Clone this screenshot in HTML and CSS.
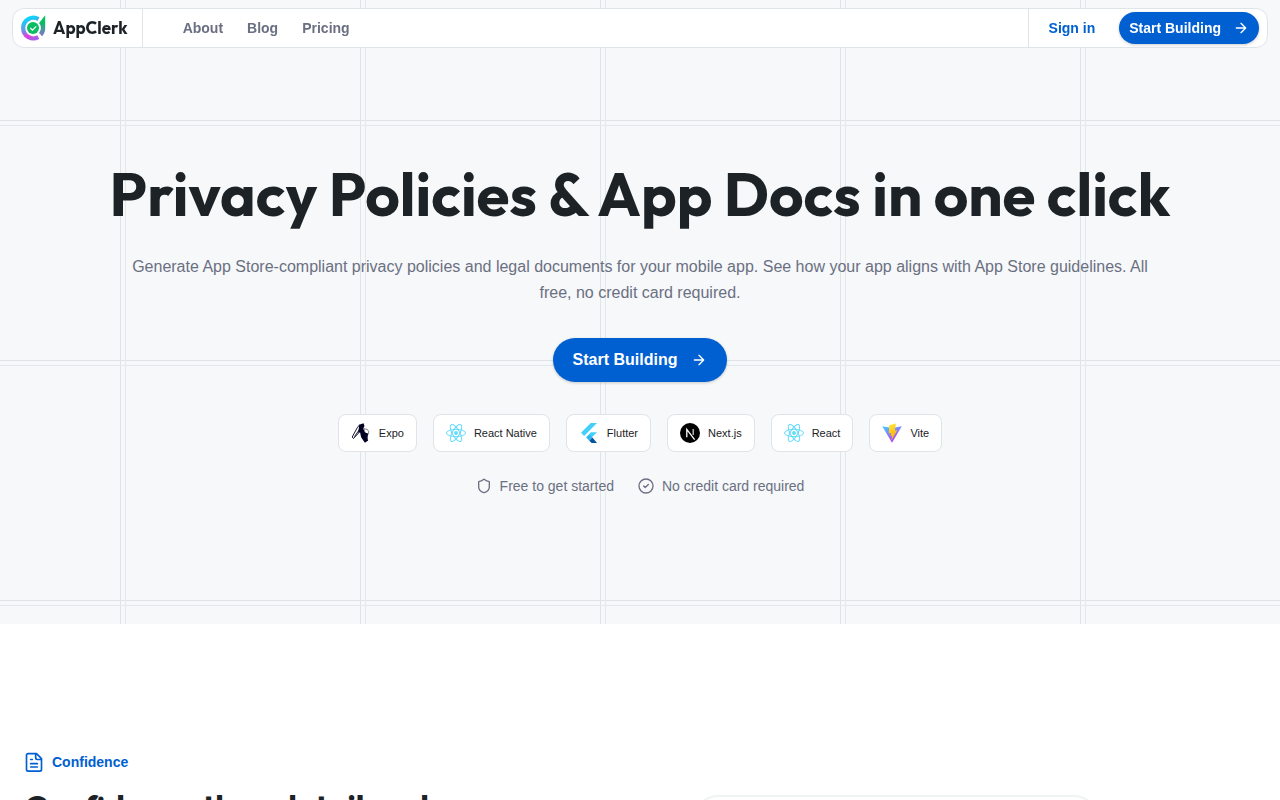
FILE: index.html
```html
<!DOCTYPE html>
<html lang="en">
<head>
<meta charset="utf-8">
<meta name="viewport" content="width=device-width, initial-scale=1">
<title>AppClerk</title>
<link rel="stylesheet" href="styles.css">
</head>
<body>
<svg class="defs" aria-hidden="true">
  <defs>
    <linearGradient id="ring" x1="0.3" y1="0" x2="0.6" y2="1"><stop offset="0" stop-color="#08d8fa"/><stop offset=".5" stop-color="#6d91e8"/><stop offset=".85" stop-color="#e838dc"/><stop offset="1" stop-color="#b05be8"/></linearGradient>
    <linearGradient id="tail" x1="0" y1="0" x2="0" y2="1"><stop offset=".35" stop-color="#08bd62"/><stop offset="1" stop-color="#8b70d6"/></linearGradient>
    <linearGradient id="vite-body" x1="0" y1="0" x2=".6" y2="1"><stop offset="0" stop-color="#41d1ff"/><stop offset="1" stop-color="#bd34fe"/></linearGradient>
    <linearGradient id="vite-bolt" x1=".4" y1="0" x2=".6" y2="1"><stop offset="0" stop-color="#ffea83"/><stop offset=".1" stop-color="#ffdd35"/><stop offset="1" stop-color="#ffa800"/></linearGradient>
    <symbol id="arrow" viewBox="0 0 24 24"><path d="M5 12h14M12 5l7 7-7 7"/></symbol>
    <symbol id="react" viewBox="0 0 20 20"><g fill="none" stroke="#61dafb"><ellipse cx="10" cy="10" rx="9.500" ry="3.700"/><ellipse cx="10" cy="10" rx="9.500" ry="3.700" transform="rotate(60 10 10)"/><ellipse cx="10" cy="10" rx="9.500" ry="3.700" transform="rotate(120 10 10)"/></g><circle cx="10" cy="10" r="1.900" fill="#61dafb"/></symbol>
  </defs>
</svg>

<header class="navbar">
  <a class="brand" href="#">
    <svg class="brand-mark" viewBox="0 0 26 26" aria-hidden="true">
      <path d="M17.500 4.100A10.300 10.300 0 1 0 17.300 22.200" fill="none" stroke="url(#ring)" stroke-width="4.200"/>
      <path d="M24.200 .2v13.300c0 3-1.200 5.800-3.200 7.800l-3-3.500c1.200-1.400 1.900-3 1.900-4.800 0-2-.7-3.500-1.800-5z" fill="url(#tail)"/>
      <circle cx="12" cy="13" r="6" fill="#08bd62"/>
      <path d="M9.300 13l2.200 2.200 3.700-3.800" fill="none" stroke="#fff" stroke-width="1.200"/>
    </svg>
    <span>AppClerk</span>
  </a>
  <nav class="nav-links" aria-label="Main">
    <a href="#">About</a>
    <a href="#">Blog</a>
    <a href="#">Pricing</a>
  </nav>
  <div class="nav-actions">
    <a class="sign-in" href="#">Sign in</a>
    <a class="button button-small" href="#">Start Building <svg class="line-icon" aria-hidden="true"><use href="#arrow"/></svg></a>
  </div>
</header>

<main>
  <section class="hero">
    <h1>Privacy Policies &amp; App Docs in one click</h1>
    <p class="lead">Generate App Store-compliant privacy policies and legal documents for your mobile app. See how your app aligns with App Store guidelines. All free, no credit card required.</p>
    <a class="button button-large" href="#">Start Building <svg class="line-icon" aria-hidden="true"><use href="#arrow"/></svg></a>
    <ul class="platforms">
      <li><svg viewBox="0 0 20 20" aria-hidden="true"><path d="M8.300 1.800l4.200-1.600 1 2.800-1.300 2.500 5 12-3.300 2.300-3.800-5.600-1-4.600-2 .2z" fill="#000020"/><path d="M8.800 1.500L6.200 4.800 1.200 14l1.300 1.500L8 9.600M3.500 13.500l5-7" fill="none" stroke="#000020" stroke-width=".9"/><path d="M12.700 5.500l3.800 1.100 1.300 2.200-.8 3-2.400-.4z" fill="#fff" stroke="#000020" stroke-width=".5"/><path d="M12.500 9l4.500 1.500-.5 5.500-2 1z" fill="#000020"/></svg>Expo</li>
      <li><svg aria-hidden="true"><use href="#react"/></svg>React Native</li>
      <li><svg viewBox="0 0 20 20" aria-hidden="true"><path d="M11.800 0H18L5.100 12.900 2 9.800z" fill="#42d0fb"/><path d="M11.800 9.200H18l-5.400 5.400-5.300 0z" fill="#42d0fb"/><path d="M7.200 14.600l3.100-3.100 3.100 3.100-3.100 3.100z" fill="#2eb8f2"/><path d="M10.300 17.700l3.100-3.100L18 20h-5.400z" fill="#07559f"/></svg>Flutter</li>
      <li><svg viewBox="0 0 20 20" aria-hidden="true"><circle cx="10" cy="10" r="10"/><path d="M6.800 14.200V6.400l7.800 10.200" fill="none" stroke="#fff" stroke-width="1.300"/><path d="M13.200 6v6" stroke="#ccc" stroke-width="1.300"/></svg>Next.js</li>
      <li><svg aria-hidden="true"><use href="#react"/></svg>React</li>
      <li><svg viewBox="0 0 20 20" aria-hidden="true"><path d="M.2 3.200L10 5l9.800-1.800L10 19.700z" fill="url(#vite-body)"/><path d="M14 .6L7.200 1.900 6.800 10.500l2.400-.4-.8 3 1.600-.4-.6 4.700 5.800-10.200-2.300.4z" fill="url(#vite-bolt)"/></svg>Vite</li>
    </ul>
    <ul class="assurances">
      <li><svg class="line-icon" viewBox="0 0 24 24" aria-hidden="true"><path d="M20 13c0 5-3.500 7.500-7.700 9a1 1 0 0 1-.6 0C7.500 20.500 4 18 4 13V6a1 1 0 0 1 1-1c2 0 4.500-1.200 6.200-2.700a1.200 1.200 0 0 1 1.600 0C14.500 3.800 17 5 19 5a1 1 0 0 1 1 1z"/></svg>Free to get started</li>
      <li><svg class="line-icon" viewBox="0 0 24 24" aria-hidden="true"><circle cx="12" cy="12" r="10.500"/><path d="M8.500 12l2.300 2.300 4.700-4.600"/></svg>No credit card required</li>
    </ul>
  </section>

  <section class="feature">
    <div class="feature-copy">
      <p class="eyebrow"><svg class="line-icon" viewBox="0 0 24 24" aria-hidden="true"><path d="M15 2H5a2 2 0 0 0-2 2v17a2 2 0 0 0 2 2h14a2 2 0 0 0 2-2V8zM14 2v5a2 2 0 0 0 2 2h5M8 9h2M8 14h8M8 18h8"/></svg>Confidence</p>
      <h2>Confidence then detail and</h2>
    </div>
    <div class="feature-card"></div>
  </section>
</main>
</body>
</html>
```
FILE: styles.css
```css
:root {
  --ink: #1c2226;
  --muted: #6a7082;
  --blue: #0060d1;
  --line: #dfe4e8;
  --sans: "Liberation Sans", Arial, sans-serif;
  --display: Outfit, Lato, sans-serif;
}

* { box-sizing: border-box; }

body {
  margin: 0;
  background: #fff;
  color: var(--ink);
  font-family: var(--sans);
  height: 100vh;
  overflow: hidden;
}

a { text-decoration: none; }
h1, h2, p, ul { margin: 0; padding: 0; }
ul { list-style: none; }
.defs { position: absolute; width: 0; height: 0; }

.line-icon {
  width: 16px;
  height: 16px;
  fill: none;
  stroke: currentColor;
  stroke-width: 2;
  stroke-linecap: round;
  stroke-linejoin: round;
}

.navbar {
  position: fixed;
  top: 8px;
  left: 12px;
  right: 12px;
  height: 40px;
  display: flex;
  background: #fff;
  border: 1px solid var(--line);
  border-radius: 12px;
}

.brand {
  display: flex;
  align-items: center;
  gap: 6px;
  padding: 0 14px 0 8px;
  border-right: 1px solid var(--line);
  color: var(--ink);
  font: 700 17px/24px var(--display);
}
.brand-mark { width: 26px; height: 26px; }

.nav-links {
  flex: 1;
  display: flex;
  align-items: center;
  gap: 24px;
  padding-left: 40px;
  font-size: 14px;
  font-weight: 700;
}
.nav-links a { color: var(--muted); }

.nav-actions {
  display: flex;
  align-items: center;
  gap: 24px;
  padding: 0 8px 0 20px;
  border-left: 1px solid var(--line);
}
.sign-in { color: var(--blue); font-size: 14px; font-weight: 700; }

.button {
  display: inline-flex;
  align-items: center;
  background: var(--blue);
  color: #fff;
  font-weight: 700;
  border-radius: 24px;
  box-shadow: 0 1px 3px #0003;
}
.button-small { height: 32px; gap: 12px; padding: 0 10px; font-size: 14px; }
.button-large { height: 44px; gap: 14px; padding: 0 20px; font-size: 16px; }

.hero {
  display: flex;
  flex-direction: column;
  align-items: center;
  padding: 154px 24px 128px;
  background-color: #f7f8fa;
  background-image:
    linear-gradient(90deg, var(--line) 1px, transparent 1px, transparent 5px, #e5e8eb 5px, #e5e8eb 6px, transparent 6px),
    linear-gradient(var(--line) 1px, transparent 1px, transparent 5px, #e5e8eb 5px, #e5e8eb 6px, transparent 6px);
  background-size: 240px 240px;
  background-position: 120px 120px;
}
.hero h1 {
  font: 700 60px/80px var(--display);
  text-align: center;
}
.lead {
  max-width: 1024px;
  margin: 20px 0 32px;
  color: var(--muted);
  font-size: 16px;
  line-height: 26px;
  text-align: center;
}

.platforms {
  display: flex;
  flex-wrap: wrap;
  justify-content: center;
  gap: 16px;
  margin: 32px 0 24px;
}
.platforms li {
  display: flex;
  align-items: center;
  gap: 8px;
  height: 38px;
  padding: 0 12px;
  background: #fff;
  border: 1px solid var(--line);
  border-radius: 8px;
  font-size: 11px;
}
.platforms svg { width: 20px; height: 20px; }

.assurances {
  display: flex;
  flex-wrap: wrap;
  justify-content: center;
  gap: 24px;
  color: var(--muted);
  font-size: 14px;
  line-height: 20px;
}
.assurances li { display: flex; align-items: center; gap: 8px; }

.feature {
  display: grid;
  grid-template-columns: 1fr 1fr;
  gap: 64px;
  padding: 128px 24px;
}
.eyebrow {
  display: flex;
  align-items: center;
  gap: 8px;
  margin-bottom: 16px;
  color: var(--blue);
  font-size: 14px;
  font-weight: 700;
  line-height: 20px;
}
.eyebrow .line-icon { width: 20px; height: 20px; }
.feature h2 { font: 700 33px/40px var(--display); }
.feature-card {
  width: 404px;
  height: 480px;
  margin: 43px 0 0 22px;
  border: 2px solid #f0f3f3;
  border-radius: 24px;
}
```
